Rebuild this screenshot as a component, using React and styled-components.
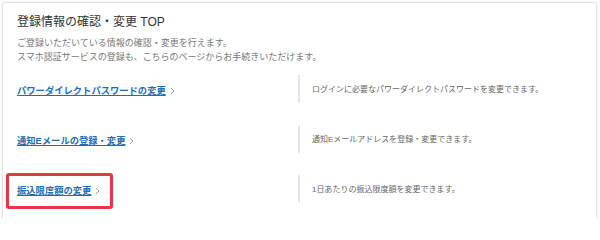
import styled, { createGlobalStyle } from "styled-components";

const GlobalStyle = createGlobalStyle`
  body {
    margin: 0;
    background: #fff;
    font-family: "Liberation Sans", "Noto Sans CJK JP", sans-serif;
  }
`;

const items = [
  {
    label: "パワーダイレクトパスワードの変更",
    text: "ログインに必要なパワーダイレクトパスワードを変更できます。",
  },
  {
    label: "通知Eメールの登録・変更",
    text: "通知Eメールアドレスを登録・変更できます。",
  },
  {
    label: "振込限度額の変更",
    text: "1日あたりの振込限度額を変更できます。",
    highlighted: true,
  },
];

export default function App() {
  return (
    <Page>
      <GlobalStyle />
      <Panel>
        <Title>登録情報の確認・変更 TOP</Title>
        <Lead>
          ご登録いただいている情報の確認・変更を行えます。
          <br />
          スマホ認証サービスの登録も、こちらのページからお手続きいただけます。
        </Lead>
        <List>
          {items.map((item) => (
            <Row key={item.label}>
              <LinkCell>
                <MenuLink href="#" $highlighted={item.highlighted}>
                  <LinkText>{item.label}</LinkText>
                  <Chevron viewBox="0 0 5 8">
                    <polyline points="1,1 4,4 1,7" />
                  </Chevron>
                </MenuLink>
              </LinkCell>
              <Divider />
              <Note>{item.text}</Note>
            </Row>
          ))}
        </List>
      </Panel>
    </Page>
  );
}

const Page = styled.div({
  padding: "2px 3px 0 2px",
  height: 216,
  overflow: "hidden",
});

const Panel = styled.section({
  border: "1px solid #e3e3e3",
  borderRadius: 3,
  boxShadow: "0 0 2px rgba(0, 0, 0, 0.12)",
  padding: "12px 0 10px 14px",
  minHeight: 260,
});

const Title = styled.h1({
  margin: 0,
  fontSize: 12,
  lineHeight: "15px",
  fontWeight: 400,
  color: "#333",
});

const Lead = styled.p({
  margin: "6px 0 0",
  fontSize: 9,
  lineHeight: "14px",
  color: "#777",
});

const List = styled.ul({
  listStyle: "none",
  margin: 0,
  padding: 0,
});

const Row = styled.li({
  display: "flex",
  alignItems: "center",
  height: 50,
});

const LinkCell = styled.div({
  width: 281,
  flexShrink: 0,
});

const MenuLink = styled.a`
  position: relative;
  display: inline-flex;
  align-items: center;
  gap: 4px;
  font-size: 9.3px;
  line-height: 12px;
  font-weight: 700;
  color: #1f6db5;
  text-decoration: none;

  ${({ $highlighted }) =>
    $highlighted &&
    `
    &::after {
      content: "";
      position: absolute;
      inset: -12px -13px -12px -11px;
      border: 3px solid #e9383c;
      border-radius: 3px;
    }
  `}
`;

const LinkText = styled.span({
  textDecoration: "underline",
  textUnderlineOffset: 1,
});

const Chevron = styled.svg({
  width: 5,
  height: 8,
  fill: "none",
  stroke: "#8aa0b8",
  strokeWidth: 1,
});

const Divider = styled.span({
  width: 2,
  height: 28,
  background: "#e6e6e6",
  flexShrink: 0,
});

const Note = styled.p({
  margin: "0 0 0 12px",
  fontSize: 8,
  lineHeight: "11px",
  color: "#666",
});
